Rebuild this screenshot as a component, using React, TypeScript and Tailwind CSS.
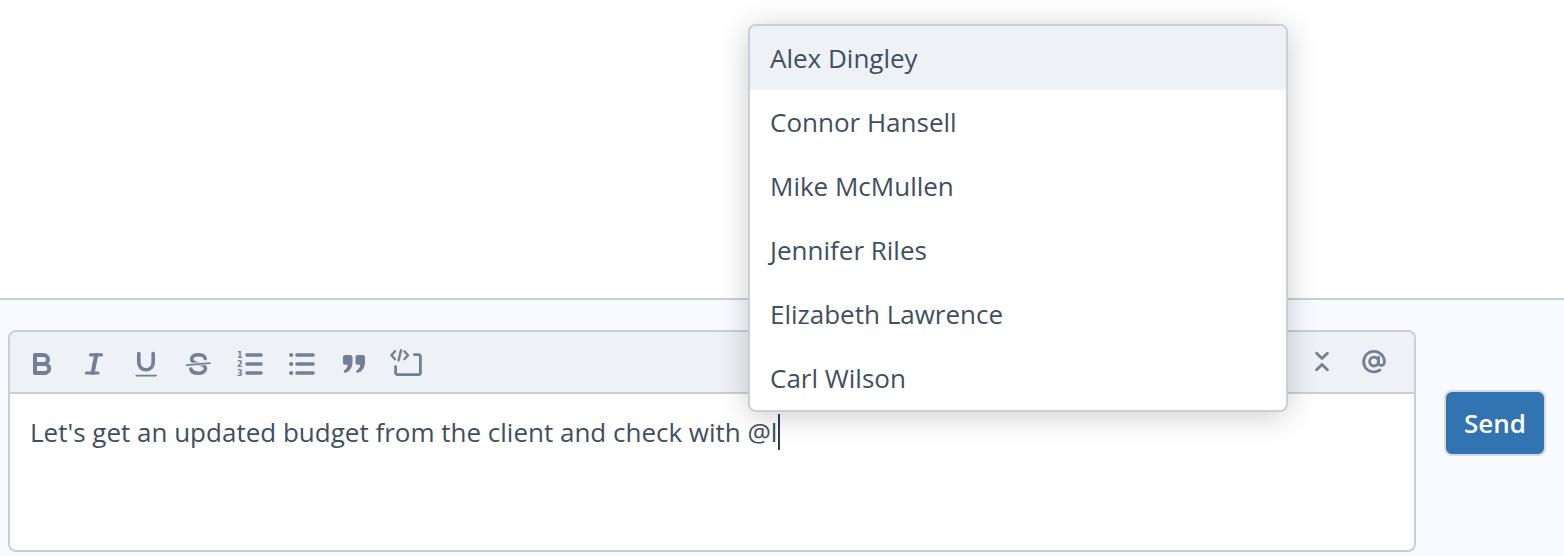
import {FC, JSX, ReactNode, useLayoutEffect, useRef, useState} from "react";

const MEMBERS = [
  "Alex Dingley",
  "Connor Hansell",
  "Mike McMullen",
  "Jennifer Riles",
  "Elizabeth Lawrence",
  "Carl Wilson",
];

const Icon: FC<{ children: ReactNode }> = ({ children }): JSX.Element => (
  <svg
    className="size-8 overflow-visible"
    viewBox="0 0 32 32"
    fill="none"
    stroke="currentColor"
    strokeWidth="3.6"
    strokeLinecap="round"
    strokeLinejoin="round"
    aria-hidden="true"
  >
    {children}
  </svg>
);

const ToolbarButton: FC<{ label: string, children: ReactNode }> = ({ label, children }): JSX.Element => (
  <button type="button" aria-label={label} className="flex h-15 w-13 items-center justify-center text-[#747f95]">
    <Icon>{children}</Icon>
  </button>
);

const Toolbar: FC = (): JSX.Element => (
  <div className="flex justify-between rounded-t-md border-b-2 border-[#c8d0d6] bg-[#eef1f6] pr-3.5 pl-1.5">
    <div className="flex">
      <ToolbarButton label="Bold">
        <path strokeWidth="4" d="M9 9h8.5a4.5 4.5 0 0 1 0 9H9M17 18h1.7a4.5 4.5 0 0 1 0 9H9V9" />
      </ToolbarButton>
      <ToolbarButton label="Italic">
        <path strokeWidth="3.2" d="M12.5 8.8h11M8.5 27h11.5" />
        <path strokeWidth="4" d="M18.2 9l-3.6 18" />
      </ToolbarButton>
      <ToolbarButton label="Underline">
        <path d="M8.8 7.6v9a7.2 7.2 0 0 0 14.4 0v-9" />
        <path strokeWidth="1.6" d="M6.2 29.6h20" />
      </ToolbarButton>
      <ToolbarButton label="Strikethrough">
        <path d="M23.2 12.4c-.6-2.4-3.4-3.6-7-3.6-4 0-6.6 1.6-6.6 4.2 0 3 3 4 6.6 4.8 4.2.8 7.2 1.8 7.2 4.8 0 2.8-3 4.6-7 4.6s-7-1.4-7.6-4.2" />
        <path stroke="#eef1f6" strokeWidth="3.6" strokeLinecap="butt" d="M5 19l23-2" />
        <path strokeWidth="1.8" d="M4.6 19.2l23.2-2" />
      </ToolbarButton>
      <ToolbarButton label="Numbered list">
        <path d="M13 9h14M13 18h14M13 27h14" />
        <g
          fill="currentColor"
          stroke="none"
          className="font-['DejaVu_Sans',sans-serif] text-[8px] font-bold"
        >
          <text x="3" y="12">1</text>
          <text x="3" y="21">2</text>
          <text x="3" y="30">3</text>
        </g>
      </ToolbarButton>
      <ToolbarButton label="Bulleted list">
        <path d="M11 9h16M11 18h16M11 27h16" />
        <path strokeWidth="4.2" d="M5.2 9h0M5.2 18h0M5.2 27h0" />
      </ToolbarButton>
      <ToolbarButton label="Quote">
        <g fill="currentColor" stroke="none">
          <path d="M7 9h5.5a2 2 0 0 1 2 2v5c0 5.4-2.4 9.2-7 10.8-1.6.5-2.5-1.4-1.2-2.3 2-1.4 3.2-3.2 3.4-5.7H7a2 2 0 0 1-2-2V11a2 2 0 0 1 2-2z" />
          <path d="M19.5 9H25a2 2 0 0 1 2 2v5c0 5.4-2.4 9.2-7 10.8-1.6.5-2.5-1.4-1.2-2.3 2-1.4 3.2-3.2 3.4-5.7h-2.7a2 2 0 0 1-2-2V11a2 2 0 0 1 2-2z" />
        </g>
      </ToolbarButton>
      <ToolbarButton label="Code block">
        <path strokeWidth="2.4" d="M5 5.2L1.4 9.2 5 13.2M14.4 5.2L18 9.2l-3.6 4M11 4.2L8.6 14.4" />
        <path strokeWidth="2.8" d="M5.6 20.6v6.2a1.8 1.8 0 0 0 1.8 1.8h21.2a1.8 1.8 0 0 0 1.8-1.8V10.4a1.8 1.8 0 0 0-1.8-1.8h-4.2" />
      </ToolbarButton>
    </div>
    <div className="flex">
      <ToolbarButton label="Collapse editor">
        <path strokeWidth="2.8" d="M10.6 7.2l5.4 5.2 5.4-5.2M10.6 23.8l5.4-5.4 5.4 5.4" />
      </ToolbarButton>
      <ToolbarButton label="Mention someone">
        <circle strokeWidth="2.8" cx="16" cy="15.6" r="4.4" />
        <path strokeWidth="2.8" d="M20.6 11.2v5.6c0 4 5.8 3.4 5.8-1.4a10.4 10.2 0 1 0-4.4 8.6" />
      </ToolbarButton>
    </div>
  </div>
);

const MentionMenu: FC<{ left: number }> = ({ left }): JSX.Element => (
  <ul
    role="listbox"
    aria-label="Mention a team member"
    style={{ left }}
    className="absolute bottom-full mb-0.5 w-[540px] overflow-hidden rounded-lg border-2 border-[#c8d0d6] bg-white shadow-[0_4px_30px_rgba(0,0,0,0.2)]"
  >
    {MEMBERS.map((name, index) => (
      <li
        key={name}
        role="option"
        aria-selected={index === 0}
        className="h-16 px-5 leading-[64px] aria-selected:bg-[#eef1f6]"
      >
        {name}
      </li>
    ))}
  </ul>
);

const App: FC = (): JSX.Element => {
  const [ message, setMessage ] = useState("Let's get an updated budget from the client and check with @l");
  const [ caretLeft, setCaretLeft ] = useState(0);
  const [ mentionLeft, setMentionLeft ] = useState(0);
  const inputRef = useRef<HTMLTextAreaElement>(null);

  // keep the caret and the mention menu next to the typed text
  useLayoutEffect(() => {
    const context = document.createElement("canvas").getContext("2d");
    if (!context || !inputRef.current) return;
    const { fontSize, fontFamily } = getComputedStyle(inputRef.current);
    context.font = `${fontSize} ${fontFamily}`;
    setCaretLeft(Math.ceil(context.measureText(message).width));
    setMentionLeft(Math.round(context.measureText(message.slice(0, message.lastIndexOf("@"))).width));
  }, [message]);

  return (
    <div className="flex min-h-screen flex-col bg-white font-['Open_Sans',sans-serif] text-[26px] text-[#3f4f60]">
      <main className="flex-1" />
      <form className="flex items-start gap-7 border-t-2 border-[#c8d0d6] bg-[#f8faff] pt-[30px] pr-[18px] pb-1 pl-2">
        <div className="min-w-0 flex-1 rounded-lg border-2 border-[#c8d0d6] bg-white">
          <Toolbar />
          <div className="relative">
            <textarea
              ref={inputRef}
              aria-label="Message"
              rows={3}
              value={message}
              onChange={(e) => setMessage(e.target.value)}
              className="block h-39 w-full resize-none px-5 pt-5 leading-9 caret-transparent outline-none"
            />
            <div className="pointer-events-none absolute top-5 left-5 h-9">
              <span style={{ left: caretLeft }} className="absolute h-9 w-0.5 bg-[#2f3f50]" />
              <MentionMenu left={mentionLeft} />
            </div>
          </div>
        </div>
        <button
          type="button"
          className="mt-15 rounded-lg border-2 border-[#d5d9e0] bg-[#3273b1] px-[18px] leading-[62px] font-semibold text-white"
        >
          Send
        </button>
      </form>
    </div>
  )
}

export default App;
